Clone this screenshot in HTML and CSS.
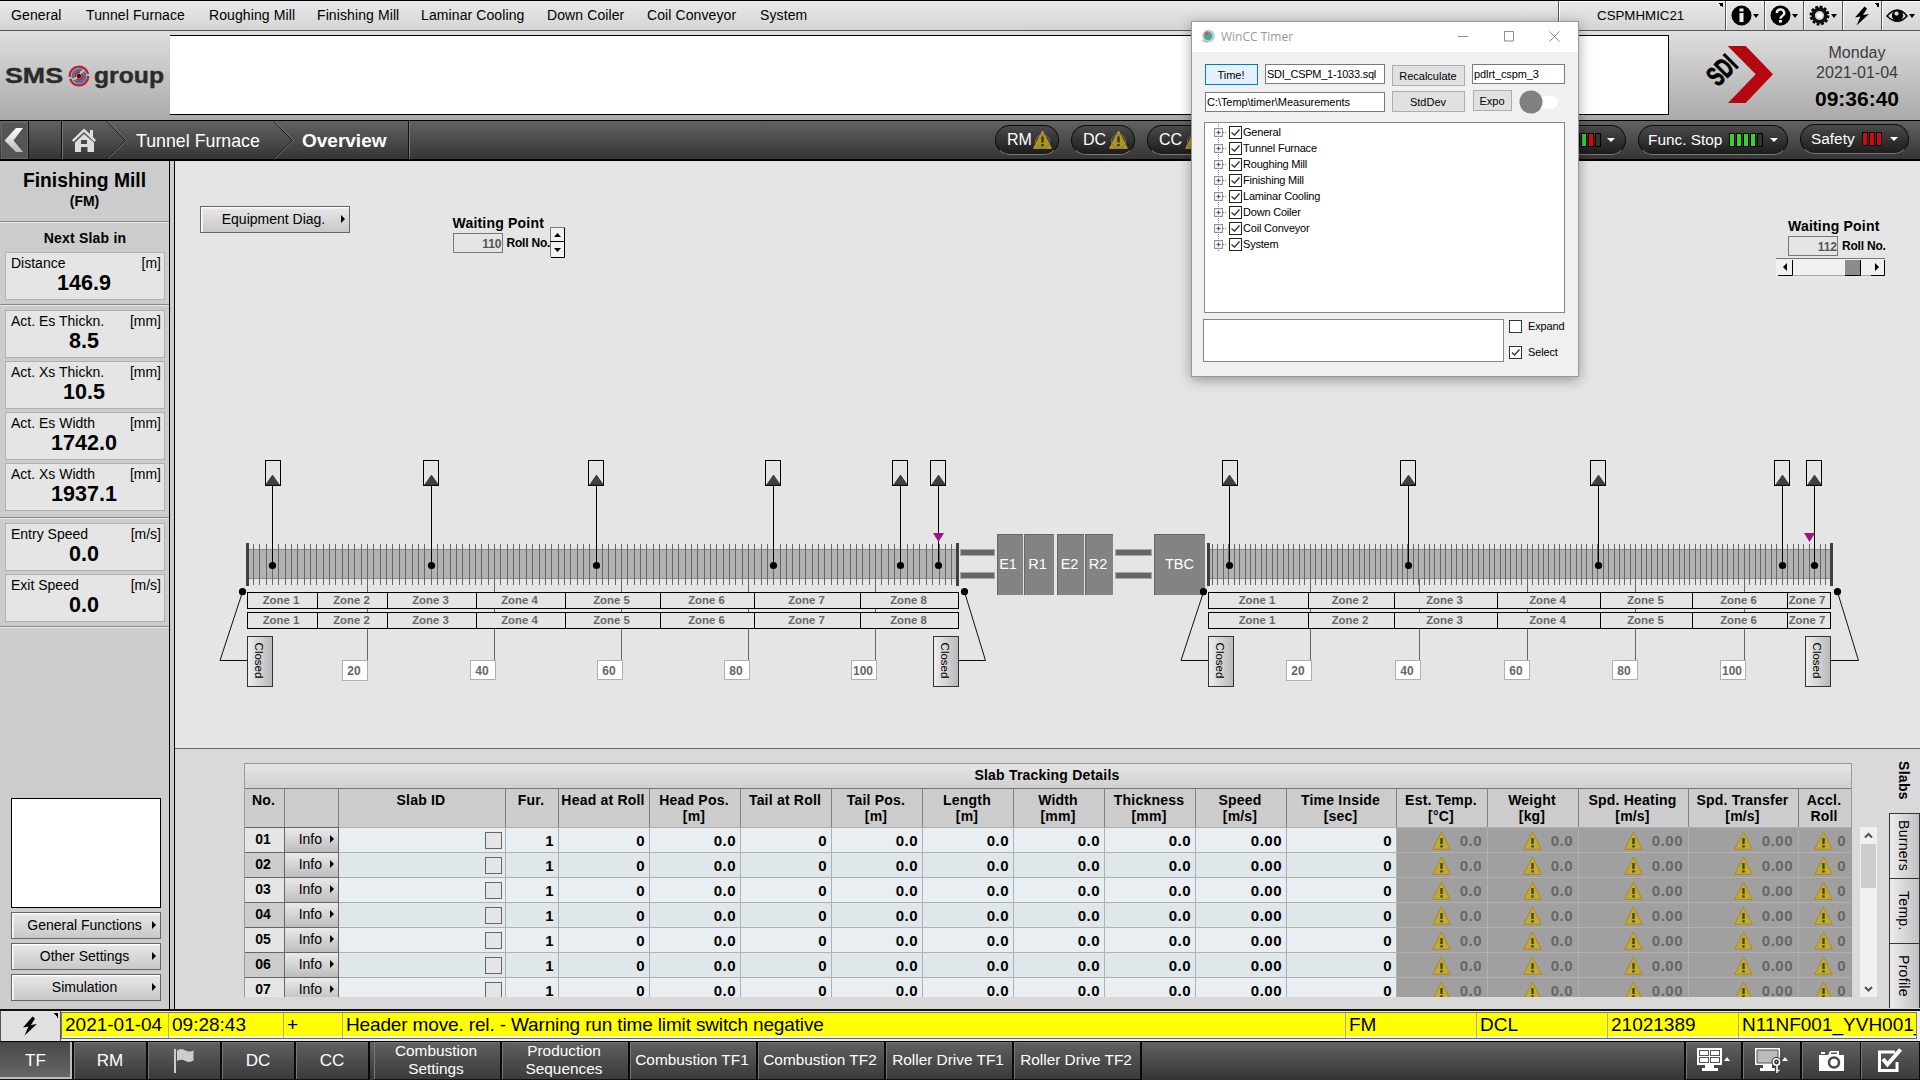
FILE: index.html
```html
<!DOCTYPE html>
<html lang="en">
<head>
<meta charset="utf-8">
<title>Tunnel Furnace - Overview</title>
<link rel="stylesheet" href="styles.css">
</head>
<body>
<svg width="0" height="0" class="defs">
  <defs>
    <linearGradient id="closedFill" x1="0" x2="1" y1="0" y2="0"><stop offset="0" stop-color="#eee"/><stop offset="1" stop-color="#b8b8b8"/></linearGradient>
    <linearGradient id="backFill" x1="0" x2="0" y1="0" y2="1"><stop offset="0" stop-color="#fff"/><stop offset="1" stop-color="#bbb"/></linearGradient>
    <symbol id="bolt" viewBox="0 0 16 20"><path d="M10.500 0.500 L1 11.500 L6.500 10.500 L2.500 19.500 L15 8 L9 9 L13 2.500 Z"/></symbol>
    <symbol id="warn" viewBox="0 0 19 19"><path d="M9.500 1 L18.300 18.300 H0.700 Z" fill="#bcae33" stroke="#b5812c"/><path d="M8.300 7 h2.400 v6 h-2.400z M8.300 14.300 h2.400 v2.200 h-2.400z" fill="#4a4418"/></symbol>
    <symbol id="warnDark" viewBox="0 0 19 19"><path d="M9.500 1 L18.300 18.300 H0.700 Z" fill="#a39a1a" stroke="#dd9218"/><circle cx="9.500" cy="11.500" r="7" fill="none" stroke="#777" stroke-width="1"/><path d="M8.300 6.500 h2.400 v6 h-2.400z M8.300 14 h2.400 v2.200 h-2.400z" fill="#3a3508"/></symbol>
  </defs>
</svg>

<nav class="menubar">
  <div class="menu">
    <span>General</span><span>Tunnel Furnace</span><span>Roughing Mill</span><span>Finishing Mill</span><span>Laminar Cooling</span><span>Down Coiler</span><span>Coil Conveyor</span><span>System</span>
  </div>
  <div class="tool station cornered">CSPMHMIC21</div>
  <div class="tool"><svg width="34" height="24" viewBox="0 0 34 24"><circle cx="12.500" cy="11.500" r="10"/><rect x="10.500" y="9" width="4" height="9" fill="#eee"/><rect x="10.500" y="4.500" width="4" height="3" fill="#eee"/><path d="M24 10h6l-3 4z"/></svg></div>
  <div class="tool"><svg width="34" height="24" viewBox="0 0 34 24"><circle cx="12.500" cy="11.500" r="10"/><path d="M8.800 9 a3.700 3.500 0 1 1 5.500 3 q-1.800 1 -1.800 2.700" fill="none" stroke="#eee" stroke-width="2.400"/><rect x="11" y="16" width="3" height="2.600" fill="#eee"/><path d="M24 10h6l-3 4z"/></svg></div>
  <div class="tool"><svg width="34" height="24" viewBox="0 0 34 24"><circle cx="12.500" cy="11.500" r="8.600" fill="none" stroke="#000" stroke-width="2.600" stroke-dasharray="2.700 1.800"/><circle cx="12.500" cy="11.500" r="6.400" fill="#d0d0d0" stroke="#111" stroke-width="3.600"/><circle cx="12.500" cy="11.500" r="3" fill="#f4f4f4"/><path d="M24 10h6l-3 4z"/></svg></div>
  <div class="tool cornered bolt-cell"><svg width="16" height="20"><use href="#bolt"/></svg></div>
  <div class="tool"><svg width="34" height="24" viewBox="0 0 34 24"><path d="M2 12 Q12.500 0 22 12 Q12.500 22.500 2 12Z" fill="none" stroke="#000" stroke-width="1.500"/><circle cx="12.500" cy="11.500" r="5.600"/><circle cx="11.500" cy="9.600" r="2.100" fill="#ddd"/><path d="M24 10h6l-3 4z"/></svg></div>
</nav>

<header class="header">
  <svg class="sms" width="170" height="88" viewBox="0 31 170 88">
    <text x="5" y="82.500" textLength="58" lengthAdjust="spacingAndGlyphs">SMS</text>
    <g fill="none" stroke-width="2.400"><circle cx="79" cy="76" r="9.300" stroke="#c8202c" stroke-dasharray="26 2 28 2"/><circle cx="79" cy="76" r="6.300" stroke="#2a7ab8" stroke-dasharray="15 2"/><circle cx="79" cy="76" r="3.700" stroke="#c8202c" stroke-dasharray="8 2"/></g><circle cx="79" cy="76" r="2.200" fill="#222"/>
    <text x="94" y="82.500" textLength="70" lengthAdjust="spacingAndGlyphs">group</text>
  </svg>
  <div class="message-box"></div>
  <svg class="sdi" width="110" height="88" viewBox="1690 31 110 88">
    <path d="M1727.700 46 H1745.700 L1773 74.300 L1745.700 103 H1728 L1755.700 74.300Z" fill="#b5070f"/>
    <text transform="translate(1718 87.500) rotate(-45)" textLength="30" lengthAdjust="spacingAndGlyphs">SDI</text>
  </svg>
  <div class="clock"><div>Monday</div><div>2021-01-04</div><b>09:36:40</b></div>
</header>

<div class="crumbs">
  <svg class="trail" width="412" height="38" viewBox="0 121 412 38">
    <rect x="1.500" y="122.500" width="26" height="36" fill="#555" stroke="#666"/>
    <path d="M16 128 H23 L13.500 140.500 L23 152 H16 L4.500 140.500Z" fill="url(#backFill)"/>
    <g fill="none" stroke="#111"><path d="M28.500 121V159M61.500 121V159M106.500 121L125.500 140.500L106.500 159M273.500 121L292.500 140.500L273.500 159M408.500 121V159"/></g>
    <g fill="none" stroke="#777"><path d="M62.500 121V159M107.500 121L126.500 140.500L107.500 159M274.500 121L293.500 140.500L274.500 159M409.500 121V159"/></g>
    <path d="M72 140 L84 128.500 L90 134 V130 H93 V137 L96 140 L94.500 142 L84 132 L73.500 142Z M75 142.500 L84 134 L94 142.500 V152 H87.500 V147 H81 V152 H75Z M81 140 H87 V144 H81Z" fill="#ddd" fill-rule="evenodd"/>
    <text x="136" y="147" class="crumb">Tunnel Furnace</text>
    <text x="302" y="147" class="crumb current">Overview</text>
  </svg>
  <div class="pills">
    <div class="pill mode">RM<svg width="19" height="19"><use href="#warnDark"/></svg></div>
    <div class="pill mode">DC<svg width="19" height="19"><use href="#warnDark"/></svg></div>
    <div class="pill mode">CC<svg width="19" height="19"><use href="#warnDark"/></svg></div>
    <div class="pill stop"><span class="bars"><i class="g"></i><i class="r"></i><i class="g"></i><i class="r"></i><i></i></span><u></u></div>
    <div class="pill func">Func. Stop<span class="bars"><i class="g"></i><i class="g"></i><i class="g"></i><i class="g"></i><i></i></span><u></u></div>
    <div class="pill safety">Safety<span class="bars"><i class="r"></i><i class="r"></i><i class="r"></i></span><u></u></div>
  </div>
</div>

<div class="body">
  <aside class="side">
    <div class="side-title"><b>Finishing Mill</b><span>(FM)</span></div>
    <section>
      <h3>Next Slab in</h3>
      <div class="card"><p>Distance<em>[m]</em></p><b>146.9</b></div>
    </section>
    <section>
      <div class="card"><p>Act. Es Thickn.<em>[mm]</em></p><b>8.5</b></div>
      <div class="card"><p>Act. Xs Thickn.<em>[mm]</em></p><b>10.5</b></div>
      <div class="card"><p>Act. Es Width<em>[mm]</em></p><b>1742.0</b></div>
      <div class="card"><p>Act. Xs Width<em>[mm]</em></p><b>1937.1</b></div>
    </section>
    <section>
      <div class="card"><p>Entry Speed<em>[m/s]</em></p><b>0.0</b></div>
      <div class="card"><p>Exit Speed<em>[m/s]</em></p><b>0.0</b></div>
    </section>
    <div class="side-foot">
      <div class="blank"></div>
      <div class="btn">General Functions</div>
      <div class="btn">Other Settings</div>
      <div class="btn">Simulation</div>
    </div>
  </aside>

  <main class="main">
    <div class="overview">
      <div class="controls">
        <div class="btn equip">Equipment Diag.</div>
        <div class="wait left">
          <div><b class="wp">Waiting Point</b><div class="roll"><span>110</span><b>Roll No.</b></div></div>
          <svg width="15" height="31" viewBox="0 0 15 31"><rect x="0" y="0" width="15" height="31" fill="#f2f2f2"/><path d="M.5 30V.5H15" fill="none" stroke="#777"/><path d="M14.500 1V30.500H1M0 14.500H14" fill="none" stroke="#000"/><path d="M4 10h7l-3.500-4zM4 21h7l-3.500 4z"/></svg>
        </div>
        <div class="wait right">
          <b class="wp">Waiting Point</b><div class="roll"><span>112</span><b>Roll No.</b></div>
          <svg width="109" height="18" viewBox="0 0 109 18"><rect width="109" height="18" fill="#f0f0f0"/><path d="M0 .5H109" stroke="#777"/><path d="M17 17.500H96" stroke="#aaa"/><rect x="69" y="2" width="15" height="15" fill="#8c8c8c"/><path d="M2 17.500H16.500V2M69 17.500H84.500V2M95 17.500H108.500V2" fill="none" stroke="#000"/><path d="M11 5v8l-4-4zM99 5v8l4-4z"/></svg>
        </div>
      </div>
      <svg id="diagram" class="diagram" width="1745" height="308" viewBox="175 440 1745 308"></svg>
    </div>
    <div class="details">
      <div class="grid">
        <div class="grid-title">Slab Tracking Details</div>
        <div class="cols head" id="head"></div>
        <div id="rows"></div>
      </div>
      <div class="scroll"><svg width="17" height="17" viewBox="0 0 17 17"><path d="M5 10.500L8.500 7L12 10.500" fill="none" stroke="#505050" stroke-width="2"/></svg><div class="thumb"></div><svg class="down" width="17" height="17" viewBox="0 0 17 17"><path d="M5 7L8.500 10.500L12 7" fill="none" stroke="#505050" stroke-width="2"/></svg></div>
      <div class="tabs"><div class="on">Slabs</div><div>Burners</div><div>Temp.</div><div>Profile</div></div>
    </div>
  </main>
</div>

<div class="alarm">
  <div class="alarm-btn cornered"><svg width="16" height="20"><use href="#bolt"/></svg></div>
  <div class="alarm-row"><span>2021-01-04</span><span>09:28:43</span><span>+</span><span class="msg">Header move. rel. - Warning run time limit switch negative</span><span>FM</span><span>DCL</span><span>21021389</span><span>N11NF001_YVH001_</span></div>
</div>

<footer class="footer">
  <div class="fb area on">TF</div><div class="fb area">RM</div>
  <div class="fb area"><svg width="20" height="25" viewBox="0 0 20 25"><path d="M0 1h2v24h-2zM3 2.500 q4.500 -3 8.500 0 q4 2 8 0 v10 q-4 2.500 -8 0.500 q-4 -2.500 -8.500 0z" fill="#ccc"/></svg></div>
  <div class="fb area">DC</div><div class="fb area">CC</div>
  <div class="fb page first">Combustion<br>Settings</div><div class="fb page">Production<br>Sequences</div><div class="fb page">Combustion TF1</div><div class="fb page">Combustion TF2</div><div class="fb page">Roller Drive TF1</div><div class="fb page">Roller Drive TF2</div>
  <div class="fb icon push"><svg width="34" height="26" viewBox="0 0 34 26"><path d="M0 0h25v17h-25z M8 17h9v3h4v3h-16v-3h3z" fill="#fff"/><path d="M2 2h10v6h-10zM13 2h10v6h-10zM2 9h10v6h-10zM13 9h10v6h-10z" fill="#555"/><path d="M3 3h8v4h-8zM14 3h8v4h-8zM3 10h8v4h-8zM14 10h8v4h-8z" fill="#fff"/><path d="M27 13h6l-3-4z" fill="#fff"/></svg></div>
  <div class="fb icon"><svg width="34" height="26" viewBox="0 0 34 26"><path d="M0 0h25v17h-25z M8 17h9v3h4v3h-16v-3h3z" fill="#fff"/><path d="M2 2h21v13h-21z" fill="#bbb" stroke="#555"/><g fill="none" stroke="#333" stroke-width="4"><circle cx="21.500" cy="14" r="3"/><path d="M22 17v9"/></g><g fill="none" stroke="#fff" stroke-width="1.600"><circle cx="21.500" cy="14" r="3.200"/><path d="M22 17v8M22 22.500h2.500"/></g><path d="M27 13h6l-3-4z" fill="#fff"/></svg></div>
  <div class="fb icon"><svg width="25" height="22" viewBox="0 0 25 22"><path d="M0 5h9l2-4h9v4h5v16h-25z M2 2h4v2h-4z" fill="#fff"/><path d="M12 2.500h6v1.500h-6z" fill="#555"/><circle cx="15" cy="12.500" r="5" fill="#fff" stroke="#484848" stroke-width="2.500"/></svg></div>
  <div class="fb icon"><svg width="26" height="25" viewBox="0 0 26 25"><path d="M18 4H2.500V22.500H20V14" fill="none" stroke="#fff" stroke-width="3"/><path d="M6 11l4.500 5.500L23.500 1.500" fill="none" stroke="#fff" stroke-width="4"/></svg></div>
</footer>

<div class="win">
  <div class="win-bar">
    <svg width="15" height="15" viewBox="0 0 15 15"><circle cx="7.500" cy="7" r="6.200" fill="#a9d3c6"/><circle cx="7" cy="7" r="4" fill="#4f9fa3"/><path d="M3 4l4 3V2z" fill="#d05050"/><path d="M1 11q3 3 6 2" stroke="#c7a75a" fill="none"/></svg>
    <span>WinCC Timer</span>
    <svg class="win-ctl" width="112" height="14" viewBox="0 0 112 14"><path d="M5 6.500h10M51.500 1.500h9v9.500h-9zM96.500 1.500l10 10M106.500 1.500l-10 10" fill="none" stroke="#8c8c8c"/></svg>
  </div>
  <div class="win-body">
    <div class="wr r1"><div class="wb primary">Time!</div><div class="wi sql">SDI_CSPM_1-1033.sql</div><div class="wb calc">Recalculate</div><div class="wi rt">pdlrt_cspm_3</div></div>
    <div class="wr r2"><div class="wi path">C:\Temp\timer\Measurements</div><div class="wb calc">StdDev</div><div class="wb expo">Expo</div><svg width="40" height="24" viewBox="0 0 40 24"><rect x="6" y="6" width="33" height="12.500" rx="6" fill="#fff"/><circle cx="12" cy="12" r="11.500" fill="#808080"/></svg></div>
    <div class="tree" id="tree"></div>
    <div class="wr r3"><div class="wi out"></div><div class="checks"><div><svg class="cb" width="13" height="13" viewBox="0 0 13 13"><rect x=".5" y=".5" width="12" height="12" fill="#fff" stroke="#333"/></svg>Expand</div><div><svg class="cb" width="13" height="13" viewBox="0 0 13 13"><rect x=".5" y=".5" width="12" height="12" fill="#fff" stroke="#333"/><path d="M3 6.500L5.500 9L10.500 3.500" fill="none" stroke="#333" stroke-width="1.300"/></svg>Select</div></div></div>
  </div>
</div>
<script src="app.js"></script>
</body>
</html>
```

FILE: styles.css
```css
* { box-sizing: border-box; }
body { margin: 0; width: 1920px; height: 1080px; overflow: hidden; background: #e5e5e5; font-family: "Liberation Sans", Arial, sans-serif; font-size: 14px; color: #000; display: flex; flex-direction: column; }
.defs { position: absolute; }
svg { display: block; flex: none; }

/* menu bar */
.menubar { height: 31px; flex: none; display: flex; border-top: 1px solid #000; border-bottom: 1px solid #555; background: linear-gradient(#e9e9e9, #d4d4d4); }
.menu { width: 1559px; display: grid; grid-template-columns: 75px 123px 108px 104px 126px 100px 113px 80px; padding-left: 11px; line-height: 29px; letter-spacing: .1px; white-space: nowrap; }
.tool { width: 39px; border-left: 1px solid #555; box-shadow: inset 1px 1px 0 #fff; display: flex; align-items: center; padding-left: 3px; }
.station { width: 167px; font-size: 13.300px; justify-content: center; padding: 0 3px 1px 0; }
.bolt-cell { padding-left: 11px; }
.cornered { background: linear-gradient(45deg, transparent 50%, #000 50%) no-repeat right 2px top 2px / 5px 5px; }

/* header */
.header { height: 89px; flex: none; display: flex; background: linear-gradient(#dedede, #aaa); }
.sms text { font-weight: 700; font-size: 22px; fill: #2b2b2b; stroke: #2b2b2b; stroke-width: .4; }
.message-box { width: 1499px; height: 80px; margin-top: 4px; background: #fff; border: solid #000; border-width: 1px 1px 1px 0; }
.sdi { margin-left: 21px; }
.sdi text { font-weight: 700; font-size: 28px; stroke: #000; stroke-width: .8; }
.clock { width: 120px; margin-left: -3px; padding-top: 12px; text-align: center; font-size: 16px; line-height: 20px; color: #3c3c3c; }
.clock b { display: block; font-size: 21px; line-height: 24px; margin-top: 4px; color: #000; }

/* breadcrumb bar */
.crumbs { height: 41px; flex: none; display: flex; border-top: 1px solid #000; border-bottom: 2px solid #000; background: linear-gradient(#626262, #353535); }
.crumb { font-size: 17.800px; fill: #fff; }
.current { font-weight: 700; font-size: 19px; }
.pills { display: flex; align-items: flex-start; padding-top: 4px; margin-left: 583px; color: #fff; font-size: 16px; }
.pill { height: 30px; border: 1px solid #0c0c0c; border-bottom-color: #777; border-radius: 15px; background: linear-gradient(#4a4a4a, #1c1c1c); display: flex; align-items: center; white-space: nowrap; padding-bottom: 1px; }
.mode { width: 64px; margin-right: 12px; padding-left: 11px; }
.mode svg { margin-left: auto; margin-right: 6px; margin-top: -1px; }
.stop { width: 120px; margin-left: 283px; justify-content: flex-end; padding-right: 10px; }
.func { width: 150px; margin-left: 12px; padding: 0 9px 1px 9px; justify-content: space-between; font-size: 15.400px; }
.safety { width: 109px; margin: -1px 0 0 12px; padding: 0 10px 1px 10px; font-size: 15.400px; justify-content: space-between; }
.bars { display: flex; gap: 1px; margin-left: 6px; }
.bars i { width: 6px; height: 14px; border: 1px solid #000; background: #333; }
.bars .g { background: #35d32c; }
.bars .r { background: #d90808; }
.pill u { border: 4px solid transparent; border-top-color: #fff; border-bottom: 0; margin: 1px 0 0 6px; }

/* body */
.body { height: 848px; flex: none; display: flex; }
.side { width: 175px; background: #ccc; border-right: 1px solid #000; box-shadow: inset -4px 0 0 #ccc, inset -5px 0 0 #000; display: flex; flex-direction: column; padding-right: 5px; }
.side-title { height: 60px; text-align: center; padding-top: 8px; }
.side-title b { display: block; font-size: 19.300px; line-height: 23px; }
.side-title span { display: block; font-weight: 700; line-height: 18px; }
.side section { border-top: 1px solid #888; box-shadow: inset 0 1px 0 #e8e8e8; padding: 5px 4px 0 5px; }
.side section:nth-of-type(1) { height: 83px; }
.side section:nth-of-type(2) { height: 213px; }
.side section:nth-of-type(3) { height: 109px; }
.side h3 { margin: 0 0 4px; padding-top: 1px; font-size: 14px; line-height: 20px; text-align: center; letter-spacing: .2px; }
.card { height: 48px; margin-bottom: 3px; background: #e5e5e5; border: 1px solid #b0b0b0; padding: 2px 3px 0 5px; }
.card p { margin: 0; display: flex; justify-content: space-between; line-height: 17px; }
.card em { font-style: normal; }
.card b { display: block; text-align: center; font-size: 21.500px; line-height: 25px; margin-top: -1px; padding-right: 4px; }
.side-foot { border-top: 1px solid #888; box-shadow: inset 0 1px 0 #e8e8e8; flex: 1; padding: 171px 8px 0 11px; }
.blank { height: 110px; background: #fff; border: 1px solid #000; margin-bottom: 4px; }
.btn { height: 27px; margin-bottom: 4px; border: 1px solid #666; background: linear-gradient(#e8e8e8, #c8c8c8); box-shadow: inset 1px 1px 0 #fff, inset 2px 2px 0 #eee; line-height: 23px; text-align: center; padding: 0 3px 1px 5px; display: grid; grid-template-columns: 1fr 5px; align-items: center; white-space: nowrap; }
.btn::after { content: ""; border: 4px solid transparent; border-left-color: #000; border-right: 0; }

/* overview */
.main { width: 1745px; }
.overview { height: 587px; }
.controls { height: 279px; display: flex; align-items: flex-start; }
.equip { width: 150px; margin: 45px 0 0 25px; }
.wait.left { margin: 52px 0 0 102.500px; display: flex; align-items: flex-start; width: 113px; }
.wait.left > svg { margin: 14px 0 0 -16px; }
.wait.left > div { width: 113px; }
.wait.right { margin: 55px 0 0 1222.500px; }
.wait.right > svg { margin: 2px 0 0 -12px; }
.wp { display: block; font-size: 14px; line-height: 20px; letter-spacing: .2px; white-space: nowrap; }
.roll { display: flex; align-items: center; gap: 4px; white-space: nowrap; }
.roll b { font-size: 12px; letter-spacing: -.2px; }
.roll span { width: 50px; height: 20px; border: 1px solid #777; color: #555; font-weight: 700; text-align: right; line-height: 20px; font-size: 12px; }
.diagram text { font-family: "Liberation Sans", Arial, sans-serif; text-anchor: middle; }
.zone-label { font-size: 11.400px; font-weight: 700; fill: #666; }
.mark-label { font-size: 12px; font-weight: 700; fill: #666; }
.closed-label { font-size: 11.500px; }
.stand-label { font-size: 14.500px; fill: #fff; }

/* slab details */
.details { height: 261px; background: #d9d9d9; border-top: 1px solid #666; display: flex; }
.grid { width: 1608px; height: 234px; margin: 14px 0 0 69px; overflow: hidden; border: solid #999; border-width: 1px 1px 0 1px; }
.grid-title { height: 24px; background: linear-gradient(#e6e6e6, #cfcfcf); text-align: center; font-weight: 700; line-height: 22px; letter-spacing: .2px; padding-right: 2px; }
.cols { display: grid; grid-template-columns: 40px 54px 167px 53px repeat(8, 91px) 110px 91px 91px 110px 110px 52px; }
.head { height: 39px; border-top: 1px solid #777; background: #ccc; font-weight: 700; letter-spacing: .2px; text-align: center; line-height: 16px; white-space: nowrap; }
.head div { border-right: 1px solid #808080; padding: 3px 2px 0 0; white-space: pre; }
.cols > div:last-child { border-right: 0; }
.row { height: 25px; background: #e8eef1; font-weight: 700; font-size: 15px; letter-spacing: .5px; }
.row:nth-child(even) { background: #dfe7ea; }
.row > div { border: solid #b0b0b0; border-width: 1px 1px 0 0; display: flex; align-items: center; justify-content: flex-end; padding: 0 4px 0 0; }
.row .no { background: #e5e5e5; border-color: #666; font-size: 14px; justify-content: center; padding: 0 3px 2px 0; letter-spacing: 0; }
.row:nth-child(even) .no { background: #ccc; }
.row .info { background: linear-gradient(#eaeaea, #bdbdbd); border-color: #666; font-weight: 400; font-size: 14px; letter-spacing: 0; padding: 0 4px 2px 0; gap: 8px; }
.info::after { content: ""; border: 4px solid transparent; border-left-color: #000; border-right: 0; }
.row .slab { padding-right: 3px; }
.slab::after { content: ""; width: 15px; height: 15px; border: 1px solid #666; background: #e5e5e5; }
.row .off { background: #a0a0a0; color: #666; gap: 9px; padding-right: 5px; }
.row .off:last-child { gap: 4px; }
.off svg { margin-top: 0; }
.scroll { width: 17px; height: 170px; margin: 78px 0 0 8px; background: #f0f0f0; }
.thumb { height: 44px; margin: 0 1px; background: #cdcdcd; }
.down { margin-top: 92px; }
.tabs { width: 31px; margin-left: 12px; font-size: 14px; letter-spacing: .3px; }
.tabs div { writing-mode: vertical-rl; width: 31px; height: 65px; line-height: 31px; text-align: center; border: 1px solid #333; border-bottom: 0; background: linear-gradient(90deg, #ececec, #c2c2c2); }
.tabs .on { height: 64px; border: 0; background: none; font-weight: 700; line-height: 32px; padding-bottom: 2px; }

/* alarm line */
.alarm { height: 32px; flex: none; display: flex; border-top: 2px solid #111; background: #ececec; }
.alarm-btn { width: 61px; border: solid #555; border-width: 0 1px 0 1px; display: flex; align-items: center; padding-left: 21px; background-color: #e0e0e0; }
.alarm-row { width: 1856px; height: 27px; margin-top: 1px; border: 1px solid #777; border-bottom-color: #666; display: grid; grid-template-columns: 107px 115px 59px 1003px 131px 131px 131px 179px; overflow: hidden; background: linear-gradient(#ff0 23px, #f4f4f4 23px); font-size: 19px; line-height: 24px; white-space: nowrap; }
.alarm-row span { border-right: 1px solid #aaa; padding-left: 3px; overflow: hidden; }
.alarm-row .msg { letter-spacing: -.145px; }

/* footer */
.footer { height: 39px; flex: none; display: flex; border-top: 1px solid #000; background: linear-gradient(#626262, #343434); color: #fff; text-align: center; }
.fb { height: 38px; display: flex; align-items: center; justify-content: center; border-right: 2px solid #0a0a0a; border-bottom: 1px solid #111; box-shadow: inset 1px 1px 0 #777; background: linear-gradient(#606060, #3a3a3a); white-space: nowrap; }
.area { width: 74px; font-size: 17px; }
.area.on { background: linear-gradient(#484848, #686868); box-shadow: inset -2px -2px 0 #bbb; padding-right: 1px; }
.page { width: 128px; font-size: 15.400px; line-height: 18px; padding: 0 2px 1px 0; }
.page.first { margin-left: 4px; }
.icon { width: 59px; }
.push { margin-left: auto; border-left: 2px solid #0a0a0a; }
.icon:nth-last-child(-n+2) { border-right-width: 1px; }

/* timer window */
.win { position: absolute; left: 1191px; top: 21px; width: 388px; height: 356px; background: #f0f0f0; border: 1px solid #999; box-shadow: 0 3px 12px rgba(0,0,0,.35); font-size: 11px; }
.win-bar { height: 30px; background: #fff; display: flex; align-items: center; padding: 0 0 1px 9px; color: #999; font: 12px "Open Sans", "Noto Sans", sans-serif; }
.win-bar span { margin-left: 5px; }
.win-ctl { margin-left: auto; margin-right: 13px; }
.win-body { padding: 12px 13px 0 12px; }
.wr { display: flex; align-items: flex-start; }
.wb { height: 21px; border: 1px solid #adadad; background: #e1e1e1; text-align: center; line-height: 20px; padding-right: 1px; }
.wi { height: 20px; border: 1px solid #7a7a7a; background: #fff; padding-left: 2px; line-height: 18px; white-space: nowrap; }
.r1 { height: 27px; padding-left: 1px; }
.primary { width: 53px; border-color: #0078d7; background: #e5f1fb; }
.sql { width: 120px; margin-left: 7px; letter-spacing: -.25px; padding-left: 1px; }
.calc { width: 73px; margin: 1px 0 0 7px; }
.rt { width: 93px; margin-left: 7px; letter-spacing: -.1px; padding-left: 1px; }
.r2 { height: 31px; padding-left: 1px; }
.path { width: 180px; margin-top: 1px; padding-left: 1px; letter-spacing: -.05px; }
.r2 .calc { margin-top: 0; }
.expo { width: 39px; margin: -1px 0 0 8px; }
.r2 svg { margin-left: 7px; margin-top: -1px; }
.tree { height: 191px; border: 1px solid #828790; background: #fff; padding: 1px 0 0 9px; }
.tree div { display: flex; align-items: center; height: 16px; gap: 1px; letter-spacing: -.2px; }
.r3 { margin-top: 6px; margin-left: -1px; }
.out { width: 301px; height: 43px; border-color: #828790; }
.checks { margin-left: 5px; display: grid; gap: 13px; padding-top: 1px; }
.checks div { display: flex; align-items: center; gap: 6px; line-height: 13px; letter-spacing: -.15px; }
```

FILE: app.js
```js
// Furnace diagram
const out = [];
const rect = (x, y, w, h, attrs) => out.push(`<rect x="${x}" y="${y}" width="${w}" height="${h}" ${attrs}/>`);
const text = (x, y, cls, s) => out.push(`<text x="${x}" y="${y}" class="${cls}">${s}</text>`);
const path = (d, attrs) => out.push(`<path d="${d}" ${attrs}/>`);

const stands = () => {
  for (const [x, w] of [[960, 35], [1115, 37]])
    for (const y of [549, 572]) rect(x + 0.5, y + 0.5, w - 1, 6, 'fill="#666" stroke="#a8a8a8"');
  for (const [x, w, s, c] of [[997, 26, 'E1', 1008], [1024, 30, 'R1', 1037.5], [1057, 27, 'E2', 1069.5], [1085, 28, 'R2', 1098], [1154, 51, 'TBC', 1179.5]]) {
    rect(x, 534, w, 61, 'fill="#838383"');
    path(`M${x + .5} 595V534.5H${x + w}`, 'fill="none" stroke="#666"');
    text(c, 569, 'stand-label', s);
  }
};

const furnaces = [
  { x0: 246, x1: 959, roll20: 367.6, pitch: 6.349, last: 112,
    marks: [[367, 342], [494, 470], [621, 597], [748, 724], [875, 851]],
    zones: [247, 317, 387, 476, 565, 660, 754, 860, 958],
    labels: [281, 351.5, 430.5, 519.5, 611.5, 706.5, 806.5, 908.5],
    sensors: [[272, 265], [431, 423], [596, 588], [773, 765], [900, 892], [938, 930]],
    waiting: 938.5, doors: [[247, 242.5, 220], [933, 964.5, 985.5]] },
  { x0: 1207, x1: 1833, roll20: 1310.2, pitch: 5.425, last: 115,
    marks: [[1310, 1286], [1419, 1395], [1527, 1504], [1635, 1612], [1744, 1720]],
    zones: [1208, 1308, 1394, 1497, 1600, 1692, 1787, 1830],
    labels: [1257, 1350, 1444.5, 1547.5, 1645.5, 1738.5, 1807],
    sensors: [[1229, 1222], [1408, 1400], [1598, 1590], [1782, 1774], [1814, 1806]],
    waiting: 1809.5, doors: [[1208, 1203.5, 1181], [1805, 1837.5, 1858.5]] },
];
stands();
for (const f of furnaces) {
  rect(f.x0 + 0.5, 549.5, f.x1 - f.x0 - 1, 29, 'fill="#b3b3b3" stroke="#8a8a8a"');
  for (let i = 2; i <= f.last; i++) rect(Math.floor(f.roll20 + (i - 20) * f.pitch), 544, 1, 41, 'fill="#666"');
  rect(f.x0, 543, 3, 43, 'fill="#404040"');
  rect(f.x1 - 3, 543, 3, 43, 'fill="#404040"');
  f.marks.forEach(([x, bx], i) => {
    rect(x, 579, 1, 82, 'fill="#666"');
    rect(bx + 0.5, 660.5, 25, i ? 19 : 20, 'fill="#fff" stroke="#b0b0b0"');
    text(bx + 12, 675, 'mark-label', (i + 1) * 20);
  });
  for (const y of [592, 612]) {
    for (let i = 0; i < f.labels.length; i++) {
      rect(f.zones[i] + 0.5, y + 0.5, f.zones[i + 1] - f.zones[i], 16, 'fill="#e5e5e5" stroke="#000"');
      text(f.labels[i], y + 12, 'zone-label', 'Zone ' + (i + 1));
    }
  }
  for (const [x, bx] of f.sensors) {
    rect(bx + 0.5, 460.5, 15, 25, 'fill="none" stroke="#000"');
    path(`M${x + .5} 475L${x + 7.5} 485H${x - 6.5}Z`, 'fill="#404040" stroke="#222" stroke-width=".6"');
    rect(x, 486, 1, 80, 'fill="#000"');
    out.push(`<circle cx="${x + .5}" cy="565.5" r="3.6"/>`);
  }
  path(`M${f.waiting - 5.5} 533h11l-5.500 9z`, 'fill="#a80e87"');
  for (const [x, hx, ex] of f.doors) {
    const side = ex < x ? x : x + 26;
    out.push(`<circle cx="${hx}" cy="591.700" r="3.600"/>`);
    path(`M${hx} 592L${ex} 660.500H${side}`, 'fill="none" stroke="#111"');
    rect(x + 0.5, 636.5, 25, 50, 'fill="url(#closedFill)" stroke="#333"');
    out.push(`<text class="closed-label" transform="translate(${x + 7.5} 660.5) rotate(90)">Closed</text>`);
  }
}
document.getElementById('diagram').innerHTML = out.join('');

// Slab table
const heads = ['No.', '', 'Slab ID', 'Fur.', 'Head at Roll', 'Head Pos.\n[m]', 'Tail at Roll', 'Tail Pos.\n[m]', 'Length\n[m]', 'Width\n[mm]', 'Thickness\n[mm]', 'Speed\n[m/s]', 'Time Inside\n[sec]', 'Est. Temp.\n[°C]', 'Weight\n[kg]', 'Spd. Heating\n[m/s]', 'Spd. Transfer\n[m/s]', 'Accl.\nRoll'];
document.getElementById('head').innerHTML = heads.map(h => `<div>${h}</div>`).join('');
const live = ['1', '0', '0.0', '0', '0.0', '0.0', '0.0', '0.0', '0.00', '0'];
const off = ['0.0', '0.0', '0.00', '0.00', '0'];
const warn = '<svg width="19" height="19"><use href="#warn"/></svg>';
document.getElementById('rows').innerHTML = [1, 2, 3, 4, 5, 6, 7].map(n =>
  `<div class="cols row"><div class="no">0${n}</div><div class="info">Info</div><div class="slab"></div>` +
  live.map(v => `<div>${v}</div>`).join('') +
  off.map(v => `<div class="off">${warn}${v}</div>`).join('') + '</div>').join('');

// Timer window tree
const node = '<svg width="23" height="16" viewBox="0 0 23 16"><path d="M4.500 0V16M9 8.500H13" stroke="#888" stroke-dasharray="1 1"/><rect x=".5" y="4.500" width="8" height="8" fill="#f4f4f4" stroke="#919191"/><path d="M2.500 8.500H6.500M4.500 6.500V10.500" stroke="#3050a0"/></svg>';
const box = '<svg class="tick" width="13" height="13" viewBox="0 0 13 13"><rect x=".5" y=".5" width="12" height="12" fill="#fff" stroke="#222"/><path d="M2.500 6.500L5.500 9L10.500 3.500" fill="none" stroke="#333" stroke-width="1.300"/></svg>';
document.getElementById('tree').innerHTML = ['General', 'Tunnel Furnace', 'Roughing Mill', 'Finishing Mill', 'Laminar Cooling', 'Down Coiler', 'Coil Conveyor', 'System'].map(s => `<div>${node}${box}${s}</div>`).join('');
for (const t of document.querySelectorAll('.tick')) t.style.marginLeft = '-9px';
```
